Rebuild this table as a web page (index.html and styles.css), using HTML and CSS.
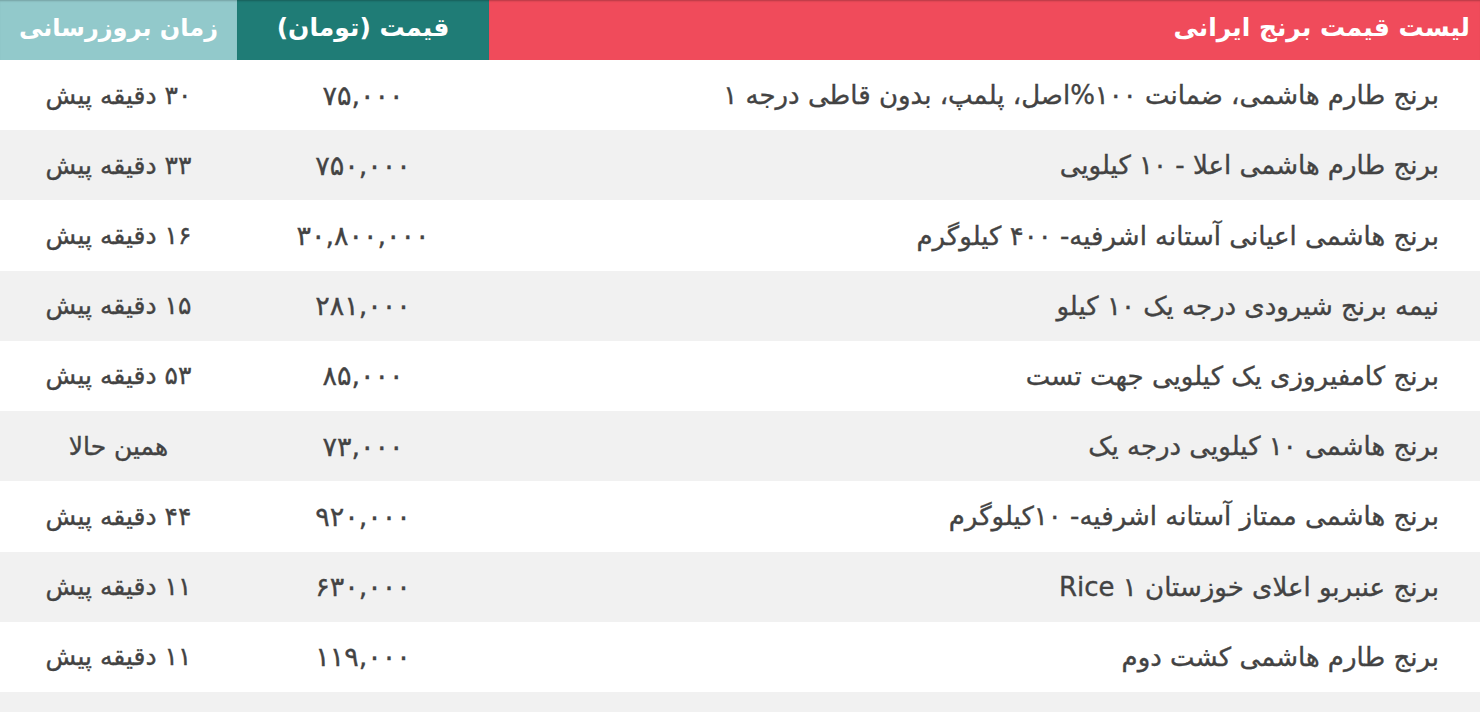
FILE: index.html
```html
<!DOCTYPE html>
<html lang="fa" dir="rtl">
<head>
<meta charset="utf-8">
<title>لیست قیمت برنج ایرانی</title>
<link rel="stylesheet" href="styles.css">
</head>
<body>
<table class="price-table">
  <colgroup>
    <col class="col-name">
    <col class="col-price">
    <col class="col-time">
  </colgroup>
  <thead>
    <tr>
      <th class="h-name">لیست قیمت برنج ایرانی</th>
      <th class="h-price">قیمت (تومان)</th>
      <th class="h-time">زمان بروزرسانی</th>
    </tr>
  </thead>
  <tbody>
    <tr><td class="name">برنج طارم هاشمی، ضمانت ۱۰۰%اصل، پلمپ، بدون قاطی درجه ۱</td><td class="price">۷۵,۰۰۰</td><td class="time">۳۰ دقیقه پیش</td></tr>
    <tr><td class="name">برنج طارم هاشمی اعلا - ۱۰ کیلویی</td><td class="price">۷۵۰,۰۰۰</td><td class="time">۳۳ دقیقه پیش</td></tr>
    <tr><td class="name">برنج هاشمی اعیانی آستانه اشرفیه- ۴۰۰ کیلوگرم</td><td class="price">۳۰,۸۰۰,۰۰۰</td><td class="time">۱۶ دقیقه پیش</td></tr>
    <tr><td class="name">نیمه برنج شیرودی درجه یک ۱۰ کیلو</td><td class="price">۲۸۱,۰۰۰</td><td class="time">۱۵ دقیقه پیش</td></tr>
    <tr><td class="name">برنج کامفیروزی یک کیلویی جهت تست</td><td class="price">۸۵,۰۰۰</td><td class="time">۵۳ دقیقه پیش</td></tr>
    <tr><td class="name">برنج هاشمی ۱۰ کیلویی درجه یک</td><td class="price">۷۳,۰۰۰</td><td class="time">همین حالا</td></tr>
    <tr><td class="name">برنج هاشمی ممتاز آستانه اشرفیه- ۱۰کیلوگرم</td><td class="price">۹۲۰,۰۰۰</td><td class="time">۴۴ دقیقه پیش</td></tr>
    <tr><td class="name">برنج عنبربو اعلای خوزستان Rice ۱</td><td class="price">۶۳۰,۰۰۰</td><td class="time">۱۱ دقیقه پیش</td></tr>
    <tr><td class="name">برنج طارم هاشمی کشت دوم</td><td class="price">۱۱۹,۰۰۰</td><td class="time">۱۱ دقیقه پیش</td></tr>
    <tr><td class="name">برنج فجر شمال درجه یک</td><td class="price">۴۵,۰۰۰</td><td class="time">۱۲ دقیقه پیش</td></tr>
  </tbody>
</table>
</body>
</html>
```

FILE: styles.css
```css
html, body {
  margin: 0;
  padding: 0;
  background: #ffffff;
}

body {
  font-family: "DejaVu Sans", "Noto Sans", sans-serif;
  overflow: hidden;
}

.price-table {
  width: 1480px;
  border-collapse: collapse;
  table-layout: fixed;
  direction: rtl;
}

.col-name { width: 991px; }
.col-price { width: 252px; }
.col-time { width: 237px; }

.price-table th {
  box-sizing: border-box;
  height: 60px;
  padding: 0 0 4px 0;
  color: #ffffff;
  font-size: 25px;
  line-height: 30px;
  font-weight: bold;
  vertical-align: middle;
}

.h-name {
  background: #f04b5b;
  text-align: right;
  padding-right: 10px !important;
  box-shadow: inset 0 2px 2px -1px rgba(0,0,0,0.25);
}

.h-price {
  background: #1f7c76;
  text-align: center;
  box-shadow: inset 0 2px 2px -1px rgba(0,0,0,0.25);
}

.h-time {
  background: #92c9cb;
  text-align: center;
  font-size: 24px !important;
  box-shadow: inset 0 2px 2px -1px rgba(0,0,0,0.2);
}

.price-table td {
  height: 70.22px;
  padding: 0;
  color: #434343;
  font-size: 25px;
  vertical-align: middle;
  white-space: nowrap;
  -webkit-text-stroke: 0.35px #434343;
}

.price-table tbody tr:nth-child(even) td {
  background: #f1f1f1;
}

.name {
  text-align: right;
  padding-right: 41px !important;
  font-size: 26px !important;
}

.price {
  text-align: center;
  font-size: 27px !important;
}

.time {
  text-align: center;
  font-size: 25px !important;
}
```
